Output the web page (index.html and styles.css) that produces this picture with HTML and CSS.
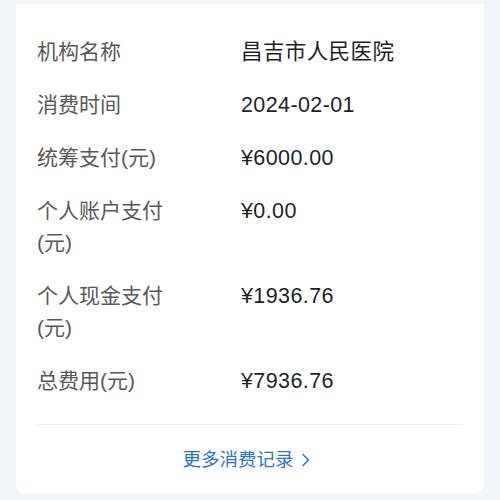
FILE: index.html
```html
<!DOCTYPE html>
<html lang="zh-CN">

<head>
    <meta charset="UTF-8">
    <title>消费记录</title>
    <link rel="stylesheet" href="styles.css">
</head>

<body>
    <div class="card">
        <ul class="info">
            <li><span class="label">机构名称</span><span class="value">昌吉市人民医院</span></li>
            <li><span class="label">消费时间</span><span class="value">2024-02-01</span></li>
            <li><span class="label">统筹支付(元)</span><span class="value">¥6000.00</span></li>
            <li><span class="label">个人账户支付(元)</span><span class="value">¥0.00</span></li>
            <li><span class="label">个人现金支付(元)</span><span class="value">¥1936.76</span></li>
            <li><span class="label">总费用(元)</span><span class="value">¥7936.76</span></li>
        </ul>
        <a href="javascript:void(0);" class="more">更多消费记录
            <svg width="9" height="14" viewBox="0 0 9 14"><path d="M2 1.5 7.5 7 2 12.5" fill="none" stroke="#2a74d0" stroke-width="1.6" stroke-linecap="round" stroke-linejoin="round"/></svg>
        </a>
    </div>
</body>

</html>
```

FILE: styles.css
```css
* {
    margin: 0;
    padding: 0;
    box-sizing: border-box;
}

html,
body {
    height: 100%;
}

body {
    background: #f1f6fb;
    font-family: "Liberation Sans", "Noto Sans CJK SC", sans-serif;
}

a {
    text-decoration: none;
}

.card {
    margin: 0 16px;
    height: 494px;
    background: #fff;
    border-top: 4px solid #f4f5f7;
    border-radius: 0 0 10px 10px;
    padding: 32px 21px 0;
}

.info {
    list-style: none;
    display: flex;
    flex-direction: column;
    gap: 21px;
    padding-bottom: 27px;
    border-bottom: 1px solid #ececec;
}

.info li {
    display: grid;
    grid-template-columns: 150px 1fr;
    column-gap: 54px;
    font-size: 21px;
    line-height: 32px;
}

.label {
    color: #595959;
}

.value {
    color: #1f1f1f;
    font-size: 21.5px;
    letter-spacing: 0.4px;
}

.more {
    display: flex;
    justify-content: center;
    align-items: center;
    gap: 7px;
    padding: 22px 8px 0 0;
    font-size: 18.5px;
    line-height: 26px;
    color: #2a74d0;
}
```
